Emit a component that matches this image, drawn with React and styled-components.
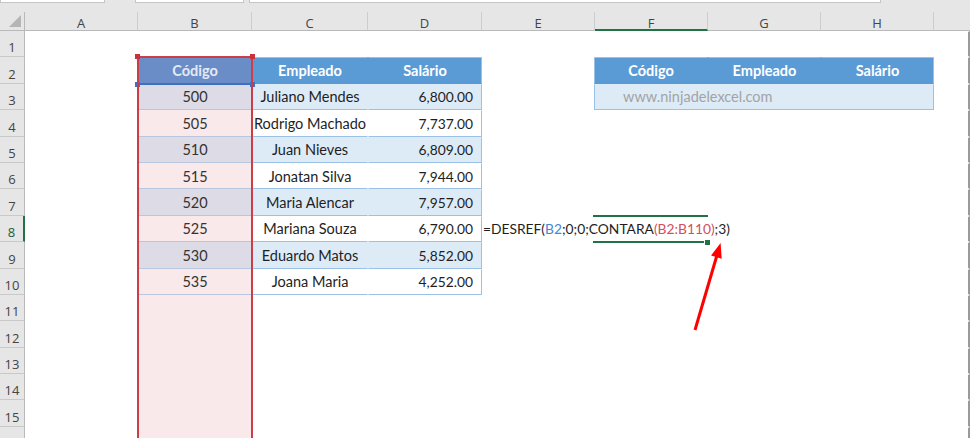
import React from 'react';
import styled, { createGlobalStyle } from 'styled-components';

const GlobalStyle = createGlobalStyle`
  html, body {
    margin: 0;
    padding: 0;
    background: #fff;
  }
  body {
    font-family: Lato, "Liberation Sans", sans-serif;
  }
`;

const people = [
  [500, 'Juliano Mendes', '6,800.00'],
  [505, 'Rodrigo Machado', '7,737.00'],
  [510, 'Juan Nieves', '6,809.00'],
  [515, 'Jonatan Silva', '7,944.00'],
  [520, 'Maria Alencar', '7,957.00'],
  [525, 'Mariana Souza', '6,790.00'],
  [530, 'Eduardo Matos', '5,852.00'],
  [535, 'Joana Maria', '4,252.00'],
];

const COLS = ['A', 'B', 'C', 'D', 'E', 'F', 'G', 'H', ''];
const ROW_COUNT = 16;
const LABELLED_ROWS = 15;

const BLUE = '#5b9bd5';
const BAND = '#ddebf7';
const EDGE = '#9bc2e6';
const GREEN = '#217346';

const Window = styled.div`
  position: relative;
  width: 970px;
  height: 438px;
  overflow: hidden;
  background: #e6e6e6;
  display: flex;
  flex-direction: column;
`;

const TopStrip = styled.div`
  height: 12px;
  flex: none;
  display: flex;
  align-items: flex-start;
`;

const Field = styled.div`
  width: ${p => p.$w}px;
  margin-left: ${p => p.$ml || 0}px;
  height: 2px;
  background: #fff;
  border: 1px solid #c6c6c6;
  border-top: none;
`;

const Sheet = styled.div`
  position: relative;
  display: grid;
  grid-template-columns: 25px 113px 114px 116px 114px 113px 113px 113px 113px 36px;
  grid-template-rows: 19px repeat(${ROW_COUNT}, 26.4px);
  background: #fff;
`;

const Corner = styled.div`
  grid-row: 1;
  grid-column: 1;
  background: #e6e6e6;
  border-right: 1px solid #b9b9b9;
  border-bottom: 1px solid #b9b9b9;
  display: flex;
  align-items: flex-end;
  justify-content: flex-end;
  padding: 0 3px 3px 0;
`;

const ColHead = styled.div`
  grid-row: 1;
  grid-column: ${p => p.$gc};
  background: #e6e6e6;
  border-right: 1px solid ${p => (p.$last ? 'transparent' : '#cdcdcd')};
  border-bottom: ${p => (p.$active ? `2px solid ${GREEN}` : '1px solid #b9b9b9')};
  display: flex;
  align-items: center;
  justify-content: center;
  padding-top: ${p => (p.$active ? 4 : 3)}px;
  line-height: 14px;
  font-family: "Open Sans", "Noto Sans", sans-serif;
  font-size: 13px;
  color: ${p => (p.$active ? '#1d5a37' : '#444')};
`;

const RowHead = styled.div`
  grid-row: ${p => p.$gr};
  grid-column: 1;
  background: #e6e6e6;
  border-bottom: 1px solid #c9c9c9;
  border-right: ${p => (p.$active ? `2px solid ${GREEN}` : '1px solid #b9b9b9')};
  display: flex;
  align-items: flex-end;
  justify-content: center;
  padding-bottom: 1px;
  line-height: 16px;
  font-family: "Open Sans", "Noto Sans", sans-serif;
  font-size: 13px;
  color: ${p => (p.$active ? '#1d5a37' : '#444')};
`;

const justify = { left: 'flex-start', right: 'flex-end', center: 'center' };

const Cell = styled.div`
  grid-row: ${p => p.$gr};
  grid-column: ${p => p.$gc} / span ${p => p.$span || 1};
  display: flex;
  align-items: center;
  justify-content: ${p => justify[p.$align || 'center']};
  padding: 0 ${p => (p.$align === 'right' ? 8 : 0)}px 0 ${p => p.$indent || 0}px;
  min-width: 0;
  white-space: nowrap;
  background: ${p => p.$bg || 'transparent'};
  border-top: 1px solid ${p => p.$bt || 'transparent'};
  border-bottom: 1px solid ${p => p.$bb || 'transparent'};
  border-left: 1px solid ${p => p.$bl || 'transparent'};
  border-right: ${p => p.$brw || 1}px solid ${p => p.$br || 'transparent'};
  margin-left: ${p => (p.$bl ? -1 : 0)}px;
  color: ${p => p.$color || '#1e1e1e'};
  font-weight: ${p => (p.$bold ? 700 : 400)};
  font-size: ${p => (p.$num ? 13.8 : 14.5)}px;
`;

const Ref = styled.span`
  color: ${p => p.$color};
`;

const RangeBox = styled.div`
  position: relative;
  grid-column: ${p => p.$col};
  grid-row: ${p => p.$row};
  margin: -1px -1px ${p => (p.$open ? 0 : -1)}px -1px;
  border: 2px solid ${p => p.$color};
  ${p => p.$open && 'border-bottom: none;'}
  pointer-events: none;
`;

const Handle = styled.span`
  position: absolute;
  width: 5px;
  height: 5px;
  background: ${p => p.$color};
  ${p => (p.$bottom ? 'bottom: -4px;' : 'top: -4px;')}
  ${p => (p.$right ? 'right: -4px;' : 'left: -4px;')}
`;

const Selection = styled.div`
  position: relative;
  grid-column: 7;
  grid-row: 9;
  margin: -1px 0 -1px -2px;
  border-top: 2px solid ${GREEN};
  border-bottom: 2px solid ${GREEN};
`;

const FillHandle = styled.span`
  position: absolute;
  right: -2px;
  bottom: -4px;
  width: 5px;
  height: 5px;
  background: ${GREEN};
  border-left: 1px solid #fff;
`;

const Arrow = styled.svg`
  position: absolute;
  left: 680px;
  top: 240px;
  overflow: visible;
`;

function SelectAll() {
  return (
    <svg width="12" height="12" viewBox="0 0 12 12">
      <polygon points="12,0 12,12 0,12" fill="#b5b5b5" />
    </svg>
  );
}

function Formula() {
  return (
    <>
      =DESREF(<Ref $color="#4a84d4">B2</Ref>;0;0;CONTARA
      <Ref $color="#d2505b">(B2:B110)</Ref>;3)
    </>
  );
}

function cellProps(r, c) {
  const odd = r % 2 === 1;
  const p = people[r - 3];
  if (c === 'B') {
    if (r === 2) return { $bg: '#6a8dc8', $color: '#e4e9f2', $bold: true, children: 'Código' };
    if (p) return { $bg: odd ? '#dcdbe6' : '#f9e9ea', $bb: '#b9c6de', $color: '#333', children: p[0] };
    if (r > 2) return { $bg: '#f9e9ea' };
  }
  if (c === 'C' || c === 'D') {
    const right = c === 'D' ? EDGE : undefined;
    if (r === 2) {
      return {
        $bg: BLUE, $color: '#fff', $bold: true, $bt: EDGE, $br: right,
        children: c === 'C' ? 'Empleado' : 'Salário',
      };
    }
    if (p) {
      return {
        $bg: odd ? BAND : '#fff', $bb: EDGE, $br: right,
        $align: c === 'D' ? 'right' : 'center',
        $num: c === 'D',
        children: c === 'C' ? p[1] : p[2],
      };
    }
  }
  if (c === 'E' && r === 8) return { $align: 'left', $num: true, children: <Formula /> };
  if (c === 'F' || c === 'G' || c === 'H') {
    if (r === 2) {
      return {
        $bl: c === 'F' ? EDGE : undefined, $br: c === 'H' ? EDGE : undefined,
        $bg: BLUE, $color: '#fff', $bold: true, $bt: EDGE,
        children: { F: 'Código', G: 'Empleado', H: 'Salário' }[c],
      };
    }
    if (r === 3) {
      if (c !== 'F') return null;
      return {
        $span: 3, $bl: EDGE, $br: EDGE, $bg: BAND, $bb: EDGE,
        $align: 'left', $indent: 28, $color: '#a3a3a3',
        children: 'www.ninjadelexcel.com',
      };
    }
  }
  if (c === '') return { $br: '#9a9a9a', $brw: 2 };
  return {};
}

export default function App() {
  const rows = Array.from({ length: ROW_COUNT }, (_, i) => i + 1);
  return (
    <Window>
      <GlobalStyle />
      <TopStrip>
        <Field $w={103} />
        <Field $w={107} $ml={30} />
        <Field $w={630} $ml={5} />
      </TopStrip>
      <Sheet>
        <Corner>
          <SelectAll />
        </Corner>
        {COLS.map((c, i) => (
          <ColHead key={`h${i}`} $gc={i + 2} $active={c === 'F'} $last={c === ''}>
            {c}
          </ColHead>
        ))}
        {rows.map(r => (
          <React.Fragment key={r}>
            <RowHead $gr={r + 1} $active={r === 8}>{r <= LABELLED_ROWS ? r : ''}</RowHead>
            {COLS.map((c, i) => {
              const props = cellProps(r, c);
              return props && <Cell key={`${r}-${i}`} $gr={r + 1} $gc={i + 2} {...props} />;
            })}
          </React.Fragment>
        ))}

        <RangeBox $col={3} $row={3} $color="#3f6fc0">
          <Handle $color="#3f6fc0" $bottom />
          <Handle $color="#3f6fc0" $bottom $right />
        </RangeBox>
        <RangeBox $col={3} $row="3 / -1" $color="#cc3d48" $open>
          <Handle $color="#c8323d" />
          <Handle $color="#c8323d" $right />
        </RangeBox>
        <Selection>
          <FillHandle />
        </Selection>
      </Sheet>

      <Arrow width="50" height="95" viewBox="0 0 50 95">
        <line x1="15" y1="90" x2="36.6" y2="16.5" stroke="#ff0000" strokeWidth="3" />
        <polygon points="40,5 40.9,17.8 32.3,15.2" fill="#ff0000" stroke="#ff0000" strokeWidth="1.5" strokeLinejoin="miter" />
      </Arrow>
    </Window>
  );
}
